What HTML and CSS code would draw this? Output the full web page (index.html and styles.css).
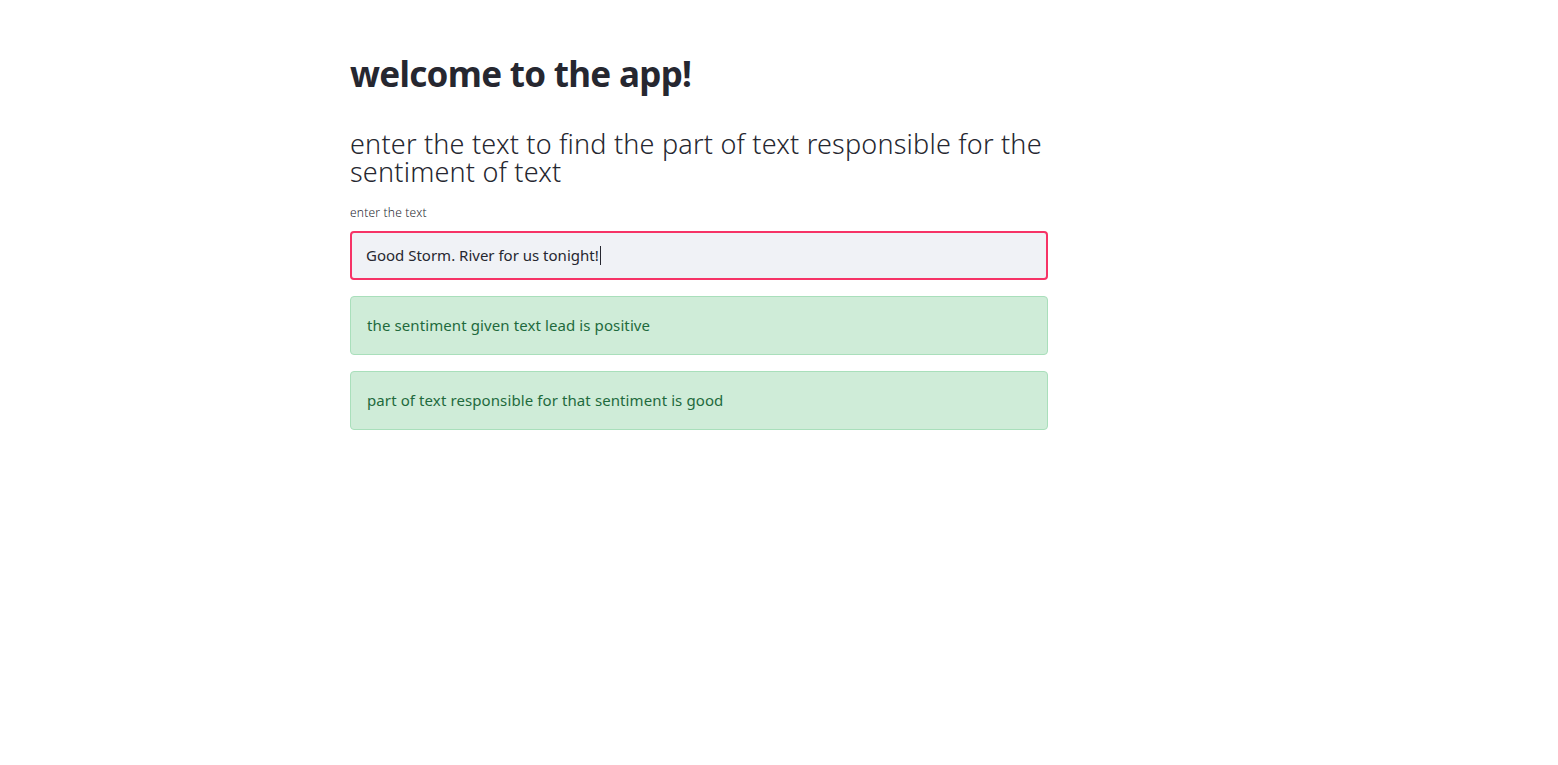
FILE: index.html
```html
<!DOCTYPE html>
<html>
<head>
<meta charset="utf-8">
<link rel="stylesheet" href="styles.css">
</head>
<body>
<main class="main">
  <h1 class="title">welcome to the app!</h1>
  <h2 class="subheader">enter the text to find the part of text responsible for the sentiment of text</h2>
  <label class="label" for="txt">enter the text</label>
  <div class="input-wrap">
    <span class="input-text">Good Storm. River for us tonight!</span><span class="caret"></span>
  </div>
  <div class="alert">the sentiment given text lead is positive</div>
  <div class="alert">part of text responsible for that sentiment is good</div>
</main>
</body>
</html>
```

FILE: styles.css
```css
* { box-sizing: border-box; }
html, body { margin: 0; padding: 0; background: #ffffff; }
body {
  font-family: "Noto Sans", "Open Sans", sans-serif;
  color: #262730;
}
.main {
  width: 698px;
  margin-left: 350px;
  padding-top: 52px;
  display: flex;
  flex-direction: column;
}
.title {
  margin: 0;
  font-size: 35px;
  font-weight: 700;
  line-height: 44px;
  letter-spacing: -0.7px;
}
.subheader {
  margin: 34px 0 0 0;
  font-size: 27px;
  font-weight: 300;
  line-height: 28px;
  letter-spacing: 0.2px;
}
.label {
  margin-top: 19px;
  font-size: 12px;
  font-weight: 300;
  line-height: 16px;
  letter-spacing: 0.2px;
}
.input-wrap {
  margin-top: 10px;
  height: 49px;
  border: 2px solid #f63366;
  border-radius: 4px;
  background: #f0f2f6;
  display: flex;
  align-items: center;
  padding-left: 14px;
  padding-bottom: 1px;
  font-size: 15px;
}
.caret {
  display: inline-block;
  width: 1px;
  height: 19px;
  background: #262730;
  margin-left: 1px;
}
.alert {
  margin-top: 16px;
  height: 59px;
  border: 1px solid #a9dfbb;
  border-radius: 4px;
  background: #cfecd8;
  color: #1e6a3d;
  display: flex;
  align-items: center;
  padding-left: 16px;
  padding-bottom: 1px;
  font-size: 15px;
  letter-spacing: 0.1px;
}
```
